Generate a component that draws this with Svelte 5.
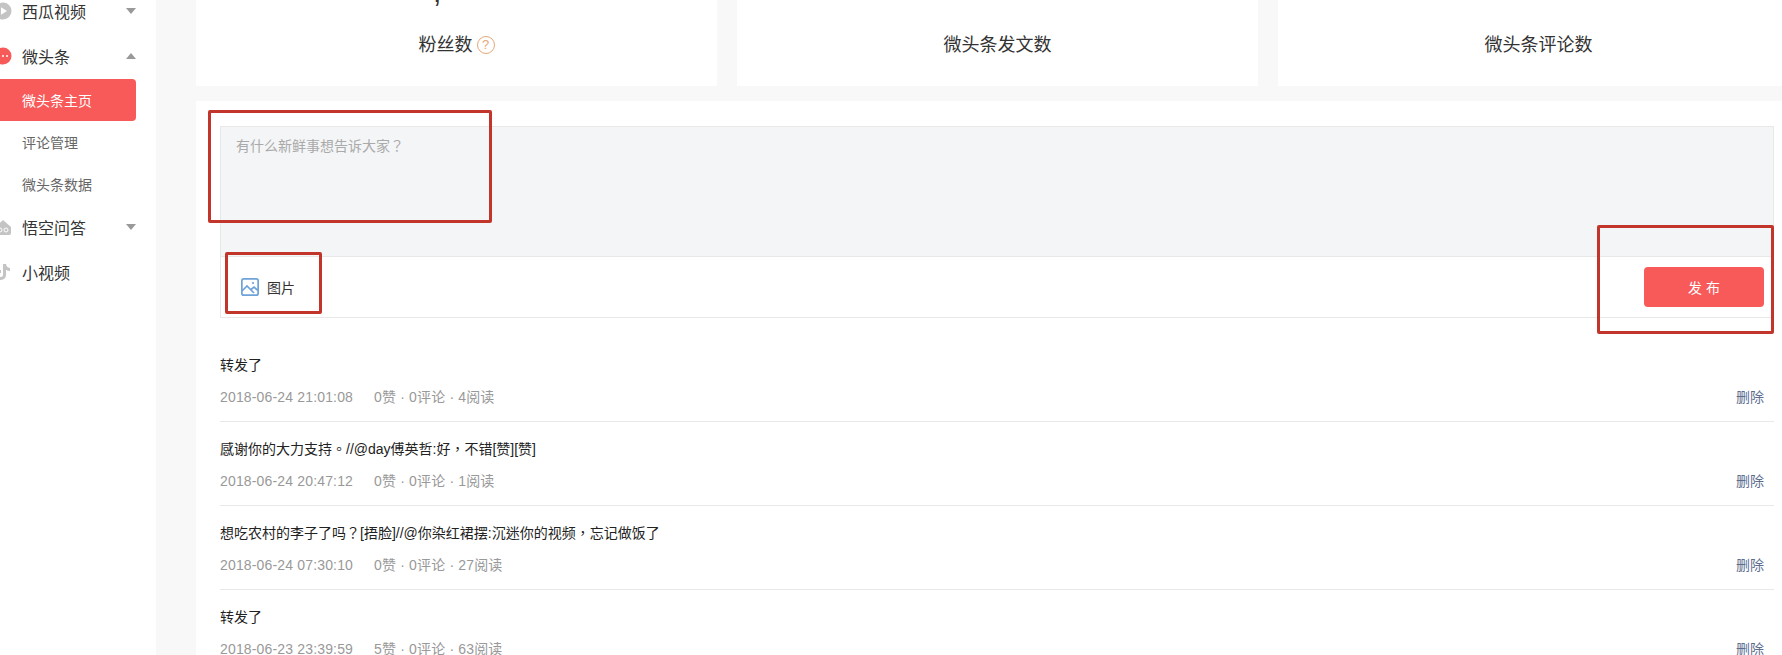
<script>
  const stats = [
    { label: '粉丝数', value: ',', help: true },
    { label: '微头条发文数' },
    { label: '微头条评论数' }
  ];

  const posts = [
    { text: '转发了', time: '2018-06-24 21:01:08', likes: 0, comments: 0, reads: 4 },
    { text: '感谢你的大力支持。//@day傅英哲:好，不错[赞][赞]', time: '2018-06-24 20:47:12', likes: 0, comments: 0, reads: 1 },
    { text: '想吃农村的李子了吗？[捂脸]//@你染红裙摆:沉迷你的视频，忘记做饭了', time: '2018-06-24 07:30:10', likes: 0, comments: 0, reads: 27 },
    { text: '转发了', time: '2018-06-23 23:39:59', likes: 5, comments: 0, reads: 63 }
  ];
</script>

<div class="page">
  <aside class="sidebar">
    <div class="nav-item">
      <svg class="nav-icon" viewBox="0 0 18 18"><circle cx="9" cy="9" r="8.5" fill="#c4c4c4" /><path d="M7 5.2v7.6L13 9z" fill="#fff" /></svg>
      <span>西瓜视频</span>
      <i class="caret down"></i>
    </div>
    <div class="nav-item">
      <svg class="nav-icon" viewBox="0 0 18 18"><circle cx="9" cy="9" r="8.5" fill="#f85959" /><circle cx="5" cy="9" r="1" fill="#fff" /><circle cx="9" cy="9" r="1" fill="#fff" /><circle cx="13" cy="9" r="1" fill="#fff" /></svg>
      <span>微头条</span>
      <i class="caret up"></i>
    </div>
    <div class="sub-item active">微头条主页</div>
    <div class="sub-item">评论管理</div>
    <div class="sub-item">微头条数据</div>
    <div class="nav-item">
      <svg class="nav-icon" viewBox="0 0 18 18"><path d="M1 9l8-7 8 7v6a2 2 0 0 1-2 2H3a2 2 0 0 1-2-2z" fill="#c4c4c4" /><circle cx="6" cy="12" r="2" fill="none" stroke="#fff" /><circle cx="12" cy="12" r="2" fill="none" stroke="#fff" /></svg>
      <span>悟空问答</span>
      <i class="caret down"></i>
    </div>
    <div class="nav-item">
      <svg class="nav-icon" viewBox="0 0 18 18"><path d="M9 1h3c.2 2.2 1.6 3.6 4 4v3c-1.500 0-2.900-.4-4-1.200V12a5 5 0 1 1-5-5v3a2 2 0 1 0 2 2z" fill="#c4c4c4" /></svg>
      <span>小视频</span>
    </div>
  </aside>

  <main class="content">
    <section class="stats">
      {#each stats as stat}
        <div class="stat-card">
          <div class="stat-value">{stat.value ?? ''}</div>
          <div class="stat-label">
            {stat.label}
            {#if stat.help}
              <span class="help">?</span>
            {/if}
          </div>
        </div>
      {/each}
    </section>

    <section class="panel">
      <div class="editor">
        <div class="input">有什么新鲜事想告诉大家？</div>
        <div class="toolbar">
          <div class="pic-btn">
            <svg width="18" height="18" viewBox="0 0 18 18" fill="none" stroke="#6fa3d8" stroke-width="1.700">
              <rect x="0.850" y="0.850" width="16.300" height="16.300" rx="2" />
              <path d="M1 13l5-5 7 7M10 11.500l3-2.500 4 3.500" />
              <circle cx="12" cy="5" r="1.100" fill="#6fa3d8" stroke="none" />
            </svg>
            <span>图片</span>
          </div>
          <button class="publish">发 布</button>
        </div>
      </div>

      <ul class="posts">
        {#each posts as post}
          <li class="post">
            <div class="post-text">{post.text}</div>
            <div class="post-meta">
              <span class="time">{post.time}</span>
              <span>{post.likes}赞 · {post.comments}评论 · {post.reads}阅读</span>
              <span class="del">删除</span>
            </div>
          </li>
        {/each}
      </ul>
    </section>
  </main>

  <!-- red annotation boxes drawn over the screenshot -->
  <div class="mark mark-input"></div>
  <div class="mark mark-pic"></div>
  <div class="mark mark-publish"></div>
</div>

<style>
  :global(body) {
    margin: 0;
    background: #f8f8f8;
  }

  .page {
    position: relative;
    display: flex;
    height: 100vh;
    overflow: hidden;
    font-family: "Liberation Sans", "Noto Sans CJK SC", sans-serif;
    color: #222;
  }

  .sidebar {
    flex: none;
    width: 156px;
    margin-top: -11px;
    background: #fff;
    font-size: 16px;
    color: #333;
  }

  .nav-item {
    position: relative;
    display: flex;
    align-items: center;
    height: 45px;
    box-sizing: border-box;
    padding: 0 0 2px 22px;
  }

  .nav-icon {
    position: absolute;
    left: -6px;
    top: 13px;
    width: 18px;
    height: 18px;
  }

  .caret {
    position: absolute;
    left: 126px;
    top: 19px;
    border-left: 5px solid transparent;
    border-right: 5px solid transparent;
  }

  .caret.down {
    border-top: 6px solid #999;
  }

  .caret.up {
    border-bottom: 6px solid #999;
  }

  .sub-item {
    display: flex;
    align-items: center;
    width: 136px;
    height: 42px;
    padding-left: 22px;
    box-sizing: border-box;
    font-size: 14px;
    color: #666;
  }

  .sub-item.active {
    background: #f85959;
    border-radius: 0 4px 4px 0;
    color: #fff;
  }

  .content {
    flex: none;
    width: 1586px;
    margin-left: 40px;
  }

  .stats {
    display: grid;
    grid-template-columns: repeat(3, 521px);
    gap: 20px;
    height: 86px;
  }

  .stat-card {
    position: relative;
    overflow: hidden;
    background: #fff;
    font-size: 18px;
    color: #333;
    text-align: center;
  }

  .stat-value {
    position: absolute;
    left: 237px;
    top: -23px;
    font-size: 30px;
    line-height: 30px;
  }

  .stat-label {
    display: flex;
    align-items: center;
    justify-content: center;
    gap: 4px;
    padding-top: 32px;
    line-height: 26px;
  }

  .help {
    display: inline-flex;
    align-items: center;
    justify-content: center;
    width: 16px;
    height: 16px;
    border: 1.500px solid #e5a878;
    border-radius: 50%;
    font-size: 13px;
    color: #e5a878;
  }

  .panel {
    margin-top: 15px;
    padding: 25px 12px 0 24px;
    background: #fff;
  }

  .editor {
    width: 1554px;
    box-sizing: border-box;
    border: 1px solid #e8e8e8;
  }

  .input {
    height: 130px;
    padding: 9px 15px;
    box-sizing: border-box;
    background: #f4f5f6;
    border-bottom: 1px solid #e8e8e8;
    font-family: "Liberation Sans", "Noto Sans CJK TC", sans-serif;
    font-size: 14px;
    line-height: 20px;
    color: #aaa;
  }

  .toolbar {
    display: flex;
    align-items: center;
    justify-content: space-between;
    height: 60px;
    padding: 0 9px 0 20px;
  }

  .pic-btn {
    display: flex;
    align-items: center;
    gap: 8px;
    font-size: 14px;
    color: #333;
  }

  .publish {
    width: 120px;
    height: 40px;
    border: 0;
    border-radius: 4px;
    background: #f85959;
    font: inherit;
    font-size: 14px;
    color: #fff;
  }

  .posts {
    margin: 20px 0 0;
    padding: 0;
    list-style: none;
  }

  .post {
    height: 84px;
    box-sizing: border-box;
    padding-top: 17px;
    width: 1554px;
    border-bottom: 1px solid #e8e8e8;
  }

  .post-text {
    font-family: "Liberation Sans", "Noto Sans CJK TC", sans-serif;
    font-size: 14px;
    line-height: 20px;
  }

  .post-meta {
    display: flex;
    gap: 21px;
    margin-top: 12px;
    font-size: 14px;
    line-height: 20px;
    letter-spacing: 0.16px;
    color: #999;
  }

  .del {
    margin-left: auto;
    margin-right: 10px;
    letter-spacing: 0;
    color: #5d6d90;
  }

  .mark {
    position: absolute;
    box-sizing: border-box;
    border: 3px solid #c1352b;
    border-radius: 2px;
  }

  .mark-input {
    left: 208px;
    top: 110px;
    width: 284px;
    height: 113px;
  }

  .mark-pic {
    left: 225px;
    top: 252px;
    width: 97px;
    height: 62px;
  }

  .mark-publish {
    left: 1597px;
    top: 225px;
    width: 177px;
    height: 109px;
  }
</style>
